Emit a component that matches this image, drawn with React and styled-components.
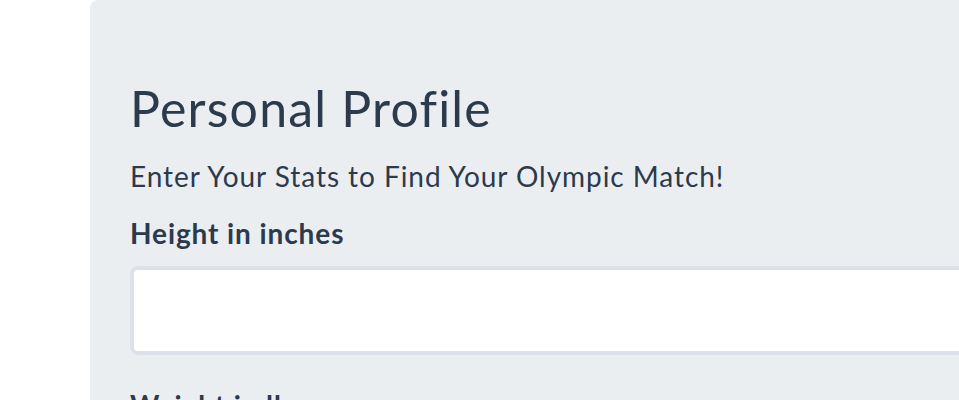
import React from "react";
import styled, { createGlobalStyle } from "styled-components";

const GlobalStyle = createGlobalStyle`
  html, body {
    margin: 0;
    padding: 0;
    background: #ffffff;
    overflow: hidden;
  }
  body {
    font-family: Lato, "Open Sans", sans-serif;
    color: #2c3a4d;
  }
`;

const Page = styled.div`
  padding-left: 90px;
  width: 1100px;
`;

const Panel = styled.section`
  background: #ebeef0;
  border-radius: 8px;
  padding: 78px 40px 40px;
  min-height: 500px;
`;

const Title = styled.h1`
  margin: 0;
  font-size: 50px;
  font-weight: 400;
  line-height: 60px;
  letter-spacing: 1.2px;
`;

const Subtitle = styled.p`
  margin: 21px 0 0;
  font-size: 28px;
  line-height: 34px;
  letter-spacing: 0.95px;
`;

const Field = styled.div`
  display: flex;
  flex-direction: column;
  margin-top: ${({ $first }) => ($first ? "23px" : "33px")};
`;

const Label = styled.label`
  font-size: 28px;
  font-weight: 700;
  line-height: 34px;
  letter-spacing: 0.9px;
  margin-bottom: 16px;
`;

const Input = styled.input`
  box-sizing: border-box;
  height: 89px;
  width: 100%;
  border: 4px solid #dde1ea;
  border-radius: 8px;
  background: #ffffff;
  font: inherit;
  font-size: 28px;
  padding: 0 20px;
  outline: none;
`;

export default function App() {
  return (
    <Page>
      <GlobalStyle />
      <Panel>
        <Title>Personal Profile</Title>
        <Subtitle>Enter Your Stats to Find Your Olympic Match!</Subtitle>
        <Field $first>
          <Label htmlFor="height">Height in inches</Label>
          <Input id="height" type="text" />
        </Field>
        <Field>
          <Label htmlFor="weight">Weight in lbs</Label>
          <Input id="weight" type="text" />
        </Field>
      </Panel>
    </Page>
  );
}
